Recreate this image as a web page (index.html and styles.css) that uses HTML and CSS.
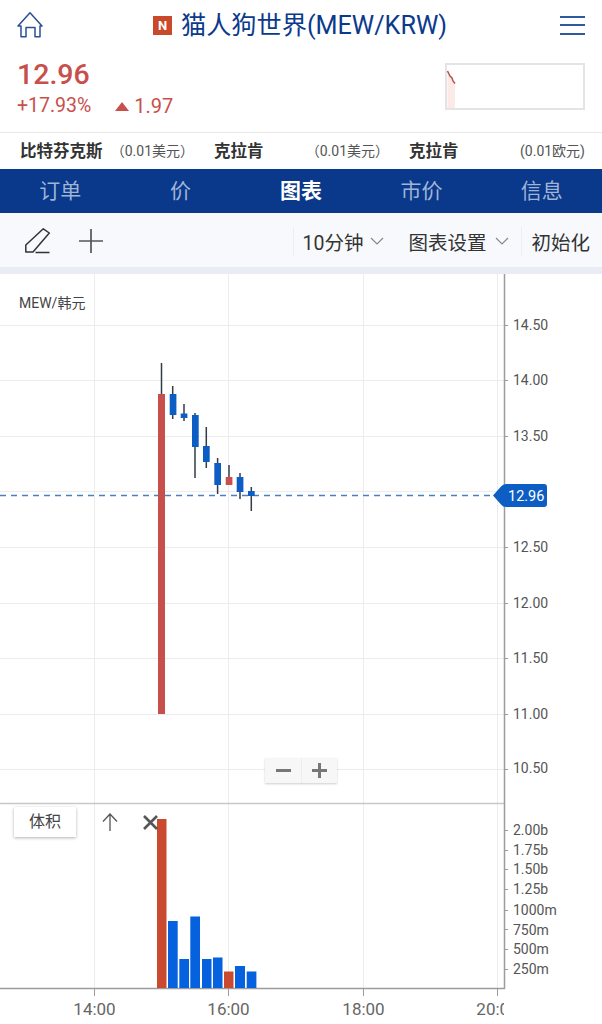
FILE: index.html
```html
<!DOCTYPE html>
<html lang="zh">
<head>
  <meta charset="UTF-8">
  <title>MEW/KRW</title>
  <link rel="stylesheet" href="styles.css">
</head>
<body>
  <header class="top-bar">
    <svg class="home-icon" width="26" height="26" viewBox="0 0 26 26"><path d="M1 14 13 .8 25 14H23V24.800H18V15.500H9V24.800H4V14Z" fill="none" stroke="#2a4f96" stroke-width="1.500" stroke-linejoin="round"/></svg>
    <h1 class="title"><span class="badge">N</span>猫人狗世界(MEW/KRW)</h1>
    <div class="burger"><span></span><span></span><span></span></div>
  </header>

  <section class="price-row">
    <div>
      <div class="price">12.96</div>
      <div class="change">
        <span>+17.93%</span>
        <span class="delta"><i class="tri"></i>1.97</span>
      </div>
    </div>
    <svg class="spark" width="140" height="47" viewBox="0 0 140 47">
      <rect x="1" y="1" width="138" height="45" fill="#fff" stroke="#e4e4e4" stroke-width="2"/>
      <path d="M2.500 8 5 13 7 15 8 18 10 20.500V45H2.500Z" fill="#fbeae8"/>
      <path d="M2.500 8 5 13 7 15 8 18 10 20.500" fill="none" stroke="#b5544c" stroke-width="1.500"/>
    </svg>
  </section>

  <section class="exchanges">
    <div class="exchange ex-a"><b>比特芬克斯</b><span>（0.01美元）</span></div>
    <div class="exchange ex-b"><b>克拉肯</b><span>（0.01美元）</span></div>
    <div class="exchange ex-c"><b>克拉肯</b><span>(0.01欧元)</span></div>
  </section>

  <nav class="tabs">
    <a>订单</a>
    <a>价</a>
    <a class="active">图表</a>
    <a>市价</a>
    <a>信息</a>
  </nav>

  <div class="toolbar">
    <svg class="tool-icon" width="26" height="26" viewBox="0 0 26 26"><path d="M.8 17 18.300.8 24.300 5 8 24H.8ZM10.500 24.500H24.500" fill="none" stroke="#333" stroke-width="1.500" stroke-linejoin="round"/></svg>
    <svg class="tool-icon plus-icon" width="24" height="24" viewBox="0 0 24 24"><path d="M12 0V24M0 12H24" fill="none" stroke="#555" stroke-width="1.700"/></svg>
    <div class="tool-right">
      <span class="tool-item sep interval">10分钟<svg width="14" height="8" viewBox="0 0 14 8"><path d="M1 1 7 7 13 1" fill="none" stroke="#888" stroke-width="1.200"/></svg></span>
      <span class="tool-item">图表设置<svg width="14" height="8" viewBox="0 0 14 8"><path d="M1 1 7 7 13 1" fill="none" stroke="#888" stroke-width="1.200"/></svg></span>
      <span class="tool-item sep reset">初始化</span>
    </div>
  </div>

  <main class="chart">
    <svg class="chart-svg" width="602" height="750" viewBox="0 274 602 750">
      <defs><clipPath id="plot"><rect x="0" y="274" width="504" height="750"/></clipPath></defs>

      <g stroke="#ececec" stroke-width="1">
        <path d="M0 325.500H504M0 380.500H504M0 436.500H504M0 491.500H504M0 547.500H504M0 603.500H504M0 658.500H504M0 714.500H504M0 769.500H504"/>
        <path d="M94.500 274V988M228.500 274V988M363.500 274V988M497.500 274V988"/>
      </g>
      <path d="M0 803.500H504" stroke="#c8c8c8" stroke-width="1.500"/>
      <path d="M0 495.500H494" stroke="#4a7fc0" stroke-width="1.400" stroke-dasharray="6 5"/>
      <path d="M0 988.500H505M504.500 274V989" fill="none" stroke="#9c9c9c" stroke-width="1.500"/>

      <g stroke="#333c48" stroke-width="1.500">
        <path d="M161.500 363V394M172.700 386V419M184 404V421M195 413V478M206.300 427V468M217.600 458V494M229 465V485M240 473V499M251.300 487V511"/>
      </g>
      <g fill="#c8504c">
        <rect x="158" y="394" width="7" height="320"/>
        <rect x="225.700" y="477" width="6.700" height="8"/>
      </g>
      <g fill="#0d5ec4">
        <rect x="169.700" y="394" width="6.700" height="21"/>
        <rect x="180.700" y="413.500" width="6.700" height="4.500"/>
        <rect x="192" y="415" width="6.700" height="32"/>
        <rect x="203" y="446" width="6.700" height="16"/>
        <rect x="214.300" y="463" width="6.700" height="22"/>
        <rect x="236.700" y="477" width="6.700" height="15"/>
        <rect x="248" y="491" width="6.700" height="5"/>
      </g>

      <g fill="#c94a2e">
        <rect x="157" y="819" width="9.500" height="169"/>
        <rect x="224" y="971.500" width="9.500" height="16.500"/>
      </g>
      <g fill="#0561dd">
        <rect x="168" y="921" width="9.700" height="67"/>
        <rect x="179.300" y="959" width="9.700" height="29"/>
        <rect x="190.300" y="916.500" width="9.700" height="71.500"/>
        <rect x="202" y="959" width="9.500" height="29"/>
        <rect x="213" y="957.500" width="9.500" height="30.500"/>
        <rect x="235" y="966" width="10" height="22"/>
        <rect x="246.700" y="971.500" width="9.700" height="16.500"/>
      </g>

      <g stroke="#9c9c9c" stroke-width="1">
        <path d="M504 325.500H508M504 380.500H508M504 436.500H508M504 547.500H508M504 603.500H508M504 658.500H508M504 714.500H508M504 769.500H508"/>
        <path d="M504 830.500H508M504 850.500H508M504 869.500H508M504 889.500H508M504 910.500H508M504 929.500H508M504 949.500H508M504 969.500H508"/>
        <path d="M94.500 989V996M228.500 989V996M363.500 989V996M497.500 989V996"/>
      </g>

      <g class="axis-y">
        <text x="513" y="330">14.50</text>
        <text x="513" y="385">14.00</text>
        <text x="513" y="441">13.50</text>
        <text x="513" y="552">12.50</text>
        <text x="513" y="608">12.00</text>
        <text x="513" y="663">11.50</text>
        <text x="513" y="719">11.00</text>
        <text x="513" y="773">10.50</text>
        <text x="513" y="835">2.00b</text>
        <text x="513" y="855">1.75b</text>
        <text x="513" y="874">1.50b</text>
        <text x="513" y="894">1.25b</text>
        <text x="513" y="915">1000m</text>
        <text x="513" y="935">750m</text>
        <text x="513" y="954">500m</text>
        <text x="513" y="974">250m</text>
      </g>

      <g class="axis-x" clip-path="url(#plot)">
        <text x="94.500" y="1015">14:00</text>
        <text x="228.500" y="1015">16:00</text>
        <text x="363.500" y="1015">18:00</text>
        <text x="497.500" y="1015">20:00</text>
      </g>

      <path d="M493 495.500 501 486.500Q503 484 506 484H544Q547 484 547 487V504Q547 507 544 507H506Q503 507 501 504.500Z" fill="#0d5ec4"/>
      <text class="tag-text" x="508" y="501">12.96</text>
    </svg>

    <div class="pair-label">MEW/韩元</div>
    <div class="zoom-btns">
      <span class="zoom-btn"><svg width="15" height="15" viewBox="0 0 15 15"><path d="M0 7.500H15" stroke="#777" stroke-width="3"/></svg></span>
      <span class="zoom-btn"><svg width="15" height="15" viewBox="0 0 15 15"><path d="M0 7.500H15M7.500 0V15" stroke="#777" stroke-width="3"/></svg></span>
    </div>
    <div class="vol-tools">
      <span class="vol-name">体积</span>
      <svg class="vol-up" width="16" height="18" viewBox="0 0 16 18"><path d="M8 18V1M1 8.500 8 1 15 8.500" fill="none" stroke="#555" stroke-width="1.300"/></svg>
      <svg class="vol-close" width="15" height="15" viewBox="0 0 15 15"><path d="M1 1 14 14M14 1 1 14" fill="none" stroke="#555" stroke-width="2.600"/></svg>
    </div>
  </main>
</body>
</html>
```

FILE: styles.css
```css
* {
  box-sizing: border-box;
}
body {
  margin: 0;
  width: 602px;
  height: 1024px;
  overflow: hidden;
  background: #fff;
  font-family: Roboto, "Noto Sans CJK SC", sans-serif;
  color: #333;
}

/* top */
.top-bar {
  height: 50px;
  display: flex;
  align-items: center;
  padding: 0 17px;
}
.home-icon {
  flex: none;
}
.title {
  flex: 1;
  margin: 0;
  display: flex;
  align-items: center;
  justify-content: center;
  padding: 0 3px 4px 0;
  font-size: 25.200px;
  font-weight: 400;
  color: #0b3a8c;
}
.badge {
  width: 19px;
  height: 19px;
  margin: 4px 9px 0 0;
  background: #c9492b;
  color: #fff;
  font-size: 13px;
  font-weight: 700;
  line-height: 19px;
  text-align: center;
}
.burger {
  width: 25px;
  display: flex;
  flex-direction: column;
  gap: 6.500px;
}
.burger span {
  height: 2px;
  background: #2f5a9e;
}

/* price */
.price-row {
  height: 83px;
  display: flex;
  justify-content: space-between;
  padding: 9px 17px 0;
  border-bottom: 1px solid #e8e8e8;
  color: #c8504c;
}
.price {
  font-size: 28.500px;
  font-weight: 500;
  line-height: 32px;
}
.change {
  display: flex;
  align-items: center;
  gap: 24px;
  margin-top: 3px;
  font-size: 19.500px;
  line-height: 24px;
}
.delta {
  display: flex;
  align-items: center;
  font-size: 20px;
}
.tri {
  width: 0;
  height: 0;
  margin-right: 5px;
  border-left: 7px solid transparent;
  border-right: 7px solid transparent;
  border-bottom: 9px solid #c8504c;
}
.spark {
  margin-top: 4px;
}

/* exchanges */
.exchanges {
  height: 36px;
  display: flex;
  justify-content: space-between;
  align-items: center;
  padding: 0 17px 2px 20px;
}
.exchange {
  display: flex;
  justify-content: space-between;
  align-items: center;
}
.exchange b {
  font-size: 16.500px;
}
.exchange span {
  font-size: 14px;
  color: #555;
}
.ex-a {
  width: 174px;
}
.ex-b {
  width: 175px;
}
.ex-c {
  width: 176px;
}

/* tabs */
.tabs {
  height: 44px;
  display: grid;
  grid-template-columns: repeat(5, 1fr);
  align-items: center;
  padding-bottom: 5px;
  background: #0a388a;
  text-align: center;
  font-size: 21px;
  color: #9fb4d6;
}
.tabs .active {
  color: #fff;
  font-weight: 700;
}

/* toolbar */
.toolbar {
  height: 61px;
  display: flex;
  align-items: center;
  padding: 2px 12px 0 25px;
  background: #f7f9fc;
  border-bottom: 7px solid #e9ecf4;
}
.plus-icon {
  margin-left: 28px;
}
.tool-right {
  margin-left: auto;
  display: flex;
  align-items: center;
  font-size: 19.500px;
  color: #333;
}
.tool-item {
  display: flex;
  align-items: center;
  gap: 9px;
  margin-left: 24px;
}
.tool-item.sep {
  border-left: 1px solid #eceef2;
  padding-left: 9px;
}
.tool-item.interval {
  gap: 7px;
}
.tool-item.reset {
  margin-left: 12px;
}

/* chart */
.chart {
  position: relative;
  height: 750px;
}
.chart-svg {
  display: block;
}
.axis-y text {
  font-size: 14px;
  fill: #555;
}
.axis-x text {
  font-size: 17px;
  fill: #666;
  text-anchor: middle;
}
.tag-text {
  font-size: 14.500px;
  fill: #fff;
}
.pair-label {
  position: absolute;
  left: 19px;
  top: 18px;
  font-size: 14px;
  color: #444;
}
.zoom-btns {
  position: absolute;
  left: 265px;
  top: 484px;
  display: flex;
  background: #f7f7f7;
  box-shadow: 0 1px 2px rgba(0, 0, 0, 0.2);
}
.zoom-btn {
  width: 36px;
  height: 25px;
  display: flex;
  align-items: center;
  justify-content: center;
}
.zoom-btn + .zoom-btn {
  border-left: 1px solid #eee;
}
.vol-tools {
  position: absolute;
  left: 14px;
  top: 533px;
  display: flex;
  align-items: center;
}
.vol-name {
  width: 62px;
  height: 30px;
  background: #fff;
  box-shadow: 0 1px 3px rgba(0, 0, 0, 0.3);
  font-size: 16px;
  line-height: 30px;
  text-align: center;
  color: #444;
}
.vol-up {
  margin-left: 26px;
}
.vol-close {
  margin-left: 25px;
}
```
